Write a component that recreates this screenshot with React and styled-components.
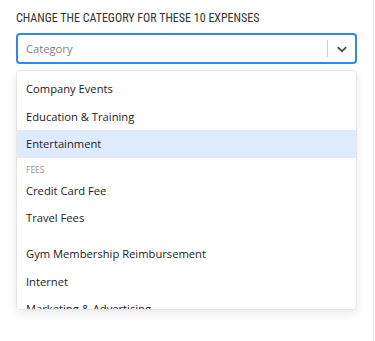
import React from 'react'
import styled, { createGlobalStyle } from 'styled-components'

const GlobalStyle = createGlobalStyle`
  html, body { margin: 0; padding: 0; background: #fff; }
  body { font-family: "Open Sans", "Noto Sans", sans-serif; }
`

const Panel = styled.div`
  box-sizing: border-box;
  width: 374px;
  height: 341px;
  padding: 11px 16px 0 16px;
  border-right: 1px solid #e4e8ee;
  background: #fff;
`

const Label = styled.div`
  font-family: "Roboto Condensed", "Liberation Sans Narrow", "DejaVu Sans Condensed", Roboto, sans-serif;
  font-size: 12px;
  line-height: 14px;
  color: #333;
  text-transform: uppercase;
  margin-bottom: 8px;
`

const Control = styled.div`
  box-sizing: border-box;
  height: 31px;
  display: flex;
  align-items: center;
  border: 2px solid #2f86f6;
  border-radius: 4px;
  padding-left: 8px;
`

const Placeholder = styled.span`
  flex: 1;
  font-size: 11.2px;
  color: #808080;
`

const Separator = styled.span`
  width: 1px;
  height: 17px;
  background: #cccccc;
`

const Indicator = styled.span`
  width: 27px;
  display: flex;
  justify-content: center;
  align-items: center;
  color: #4a4a4a;
`

const Menu = styled.div`
  box-sizing: border-box;
  margin-top: 6px;
  height: 240px;
  overflow: hidden;
  border: 1px solid #e6e6e6;
  border-radius: 4px;
  box-shadow: 0 4px 10px rgba(0, 0, 0, 0.08);
  padding-top: 4px;
`

const Group = styled.div`
  padding: 4px 0;
`

const GroupHeading = styled.div`
  font-size: 8.5px;
  line-height: 11px;
  color: #9a9a9a;
  text-transform: uppercase;
  padding: 2px 9px 2px;
`

const Option = styled.div`
  font-size: 11.2px;
  line-height: 15.6px;
  padding: 6px 9px;
  color: #222;
  white-space: nowrap;
  background: ${({ active }) => (active ? '#deebff' : 'transparent')};
`

const Chevron = () => (
  <svg width="16" height="16" viewBox="0 0 20 20" fill="currentColor">
    <path d="M4.516 7.548c0.436-0.446 1.043-0.481 1.576 0l3.908 3.747 3.908-3.747c0.533-0.481 1.141-0.446 1.574 0 0.436 0.445 0.408 1.197 0 1.615-0.406 0.418-4.695 4.502-4.695 4.502-0.217 0.223-0.502 0.335-0.787 0.335s-0.57-0.112-0.789-0.335c0 0-4.287-4.084-4.695-4.502s-0.436-1.17 0-1.615z" />
  </svg>
)

const groups = [
  { options: ['Company Events', 'Education & Training', 'Entertainment'] },
  { heading: 'Fees', options: ['Credit Card Fee', 'Travel Fees'] },
  { options: ['Gym Membership Reimbursement', 'Internet', 'Marketing & Advertising'] },
]

export default function App() {
  return (
    <>
      <GlobalStyle />
      <Panel>
        <Label>Change the category for these 10 expenses</Label>
        <Control>
          <Placeholder>Category</Placeholder>
          <Separator />
          <Indicator>
            <Chevron />
          </Indicator>
        </Control>
        <Menu>
          {groups.map((g, i) =>
            i === 0 ? (
              g.options.map((o) => (
                <Option key={o} active={o === 'Entertainment'}>{o}</Option>
              ))
            ) : (
              <Group key={i}>
                {g.heading && <GroupHeading>{g.heading}</GroupHeading>}
                {g.options.map((o) => (
                  <Option key={o}>{o}</Option>
                ))}
              </Group>
            )
          )}
        </Menu>
      </Panel>
    </>
  )
}
